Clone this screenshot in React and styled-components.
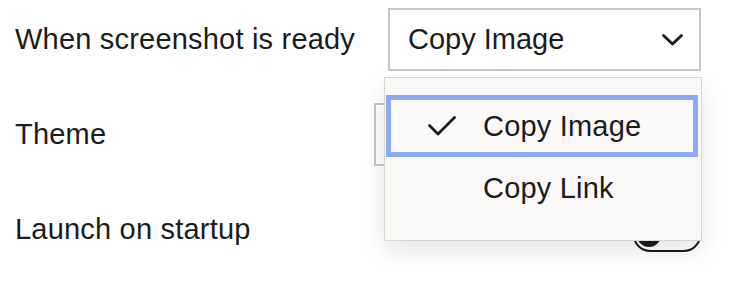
import React from "react";
import styled, { createGlobalStyle } from "styled-components";

const GlobalStyle = createGlobalStyle`
  body {
    margin: 0;
    background: #ffffff;
    font-family: "Liberation Sans", Arial, sans-serif;
    color: #1c1c1c;
  }
`;

const Page = styled.div`
  display: flex;
  flex-direction: column;
  gap: 32px;
  padding: 8px 29px 0 15px;
  width: 730px;
  height: 288px;
  box-sizing: border-box;
  overflow: hidden;
`;

const Row = styled.div`
  display: flex;
  align-items: center;
  justify-content: space-between;
  height: 63px;
`;

const Label = styled.span`
  font-size: 29px;
  letter-spacing: 0.2px;
  line-height: 1;
`;

const SelectWrap = styled.div`
  position: relative;
  z-index: ${(p) => (p.$open ? 2 : 1)};
`;

const SelectBox = styled.div`
  display: flex;
  align-items: center;
  justify-content: space-between;
  width: ${(p) => p.$width}px;
  height: 63px;
  box-sizing: border-box;
  border: 2px solid #cac7c0;
  background: #ffffff;
  padding: 0 16px 0 18px;
  font-size: 29px;
`;

const Menu = styled.div`
  position: absolute;
  top: calc(100% + 6px);
  left: -4px;
  right: -1px;
  background: #faf9f7;
  border: 1px solid #d9d6cf;
  box-shadow: 0 10px 24px rgba(0, 0, 0, 0.1);
  padding: 17px 0 21px;
  display: flex;
  flex-direction: column;
`;

const Item = styled.div`
  display: flex;
  align-items: center;
  height: 62px;
  box-sizing: border-box;
  margin: 0 3px 0 1px;
  padding-left: 37px;
  font-size: 29px;
  letter-spacing: 0.2px;
  border: 5px solid ${(p) => (p.$active ? "#8ca9f2" : "transparent")};
`;

const CheckSlot = styled.span`
  width: 28px;
  height: 20px;
  margin-right: 27px;
  display: flex;
`;

const Toggle = styled.div`
  width: 68px;
  height: 34px;
  box-sizing: border-box;
  border: 2px solid #1c1c1c;
  border-radius: 17px;
  background: #ffffff;
  display: flex;
  align-items: center;
  padding-left: 2px;
  margin-top: 10px;
`;

const Knob = styled.span`
  width: 24px;
  height: 24px;
  border-radius: 50%;
  background: #1c1c1c;
`;

const Chevron = () => (
  <svg width="21" height="12" viewBox="0 0 21 12" fill="none">
    <path d="M1.5 1.5 L10.5 10 L19.5 1.5" stroke="#1c1c1c" strokeWidth="2.8" strokeLinecap="round" strokeLinejoin="round" />
  </svg>
);

const Check = () => (
  <svg width="28" height="20" viewBox="0 0 28 20" fill="none">
    <path d="M1.5 9.5 L10 18 L26.5 1.5" stroke="#1c1c1c" strokeWidth="2.8" strokeLinecap="round" strokeLinejoin="round" />
  </svg>
);

export default function App() {
  return (
    <>
      <GlobalStyle />
      <Page>
        <Row>
          <Label>When screenshot is ready</Label>
          <SelectWrap $open>
            <SelectBox $width={313}>
              <span>Copy Image</span>
              <Chevron />
            </SelectBox>
            <Menu>
              <Item $active>
                <CheckSlot>
                  <Check />
                </CheckSlot>
                Copy Image
              </Item>
              <Item>
                <CheckSlot />
                Copy Link
              </Item>
            </Menu>
          </SelectWrap>
        </Row>
        <Row>
          <Label>Theme</Label>
          <SelectWrap>
            <SelectBox $width={327}>
              <span />
              <Chevron />
            </SelectBox>
          </SelectWrap>
        </Row>
        <Row>
          <Label>Launch on startup</Label>
          <Toggle>
            <Knob />
          </Toggle>
        </Row>
      </Page>
    </>
  );
}
